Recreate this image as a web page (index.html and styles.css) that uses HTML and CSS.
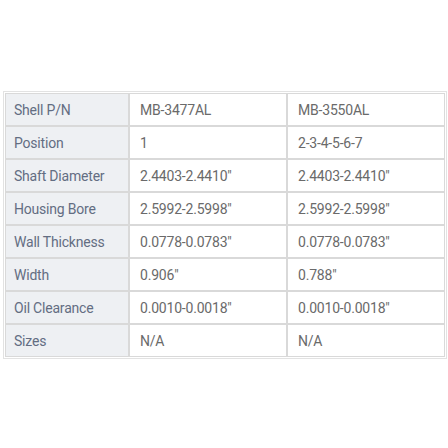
FILE: index.html
```html
<!DOCTYPE html>
<html>
<head>
<meta charset="utf-8">
<link rel="stylesheet" href="styles.css">
</head>
<body>
<table class="spec">
  <tr><th>Shell P/N</th><td>MB-3477AL</td><td>MB-3550AL</td></tr>
  <tr><th>Position</th><td>1</td><td>2-3-4-5-6-7</td></tr>
  <tr><th>Shaft Diameter</th><td>2.4403-2.4410"</td><td>2.4403-2.4410"</td></tr>
  <tr><th>Housing Bore</th><td>2.5992-2.5998"</td><td>2.5992-2.5998"</td></tr>
  <tr><th>Wall Thickness</th><td>0.0778-0.0783"</td><td>0.0778-0.0783"</td></tr>
  <tr><th>Width</th><td>0.906"</td><td>0.788"</td></tr>
  <tr><th>Oil Clearance</th><td>0.0010-0.0018"</td><td>0.0010-0.0018"</td></tr>
  <tr><th>Sizes</th><td>N/A</td><td>N/A</td></tr>
</table>
</body>
</html>
```
FILE: styles.css
```css
html, body {
  margin: 0;
  background: #ffffff;
}
body {
  padding: 91px 0 0 3px;
  font-family: Roboto, "Liberation Sans", sans-serif;
  font-size: 14px;
  letter-spacing: -0.2px;
}
.spec {
  border-collapse: separate;
  border-spacing: 0;
  border: 1px solid #e2e2e2;
  padding: 1px;
  table-layout: fixed;
  width: 443px;
}
.spec th, .spec td {
  height: 31px;
  border: 1px solid #d9d9d9;
  padding: 0 0 0 8px;
  text-align: left;
  vertical-align: middle;
  font-weight: 400;
  white-space: nowrap;
}
.spec th {
  width: 114px;
  background: #eef0f3;
  color: #636d82;
}
.spec td {
  width: 146px;
  color: #6a6a6a;
  padding-left: 10px;
}
```
